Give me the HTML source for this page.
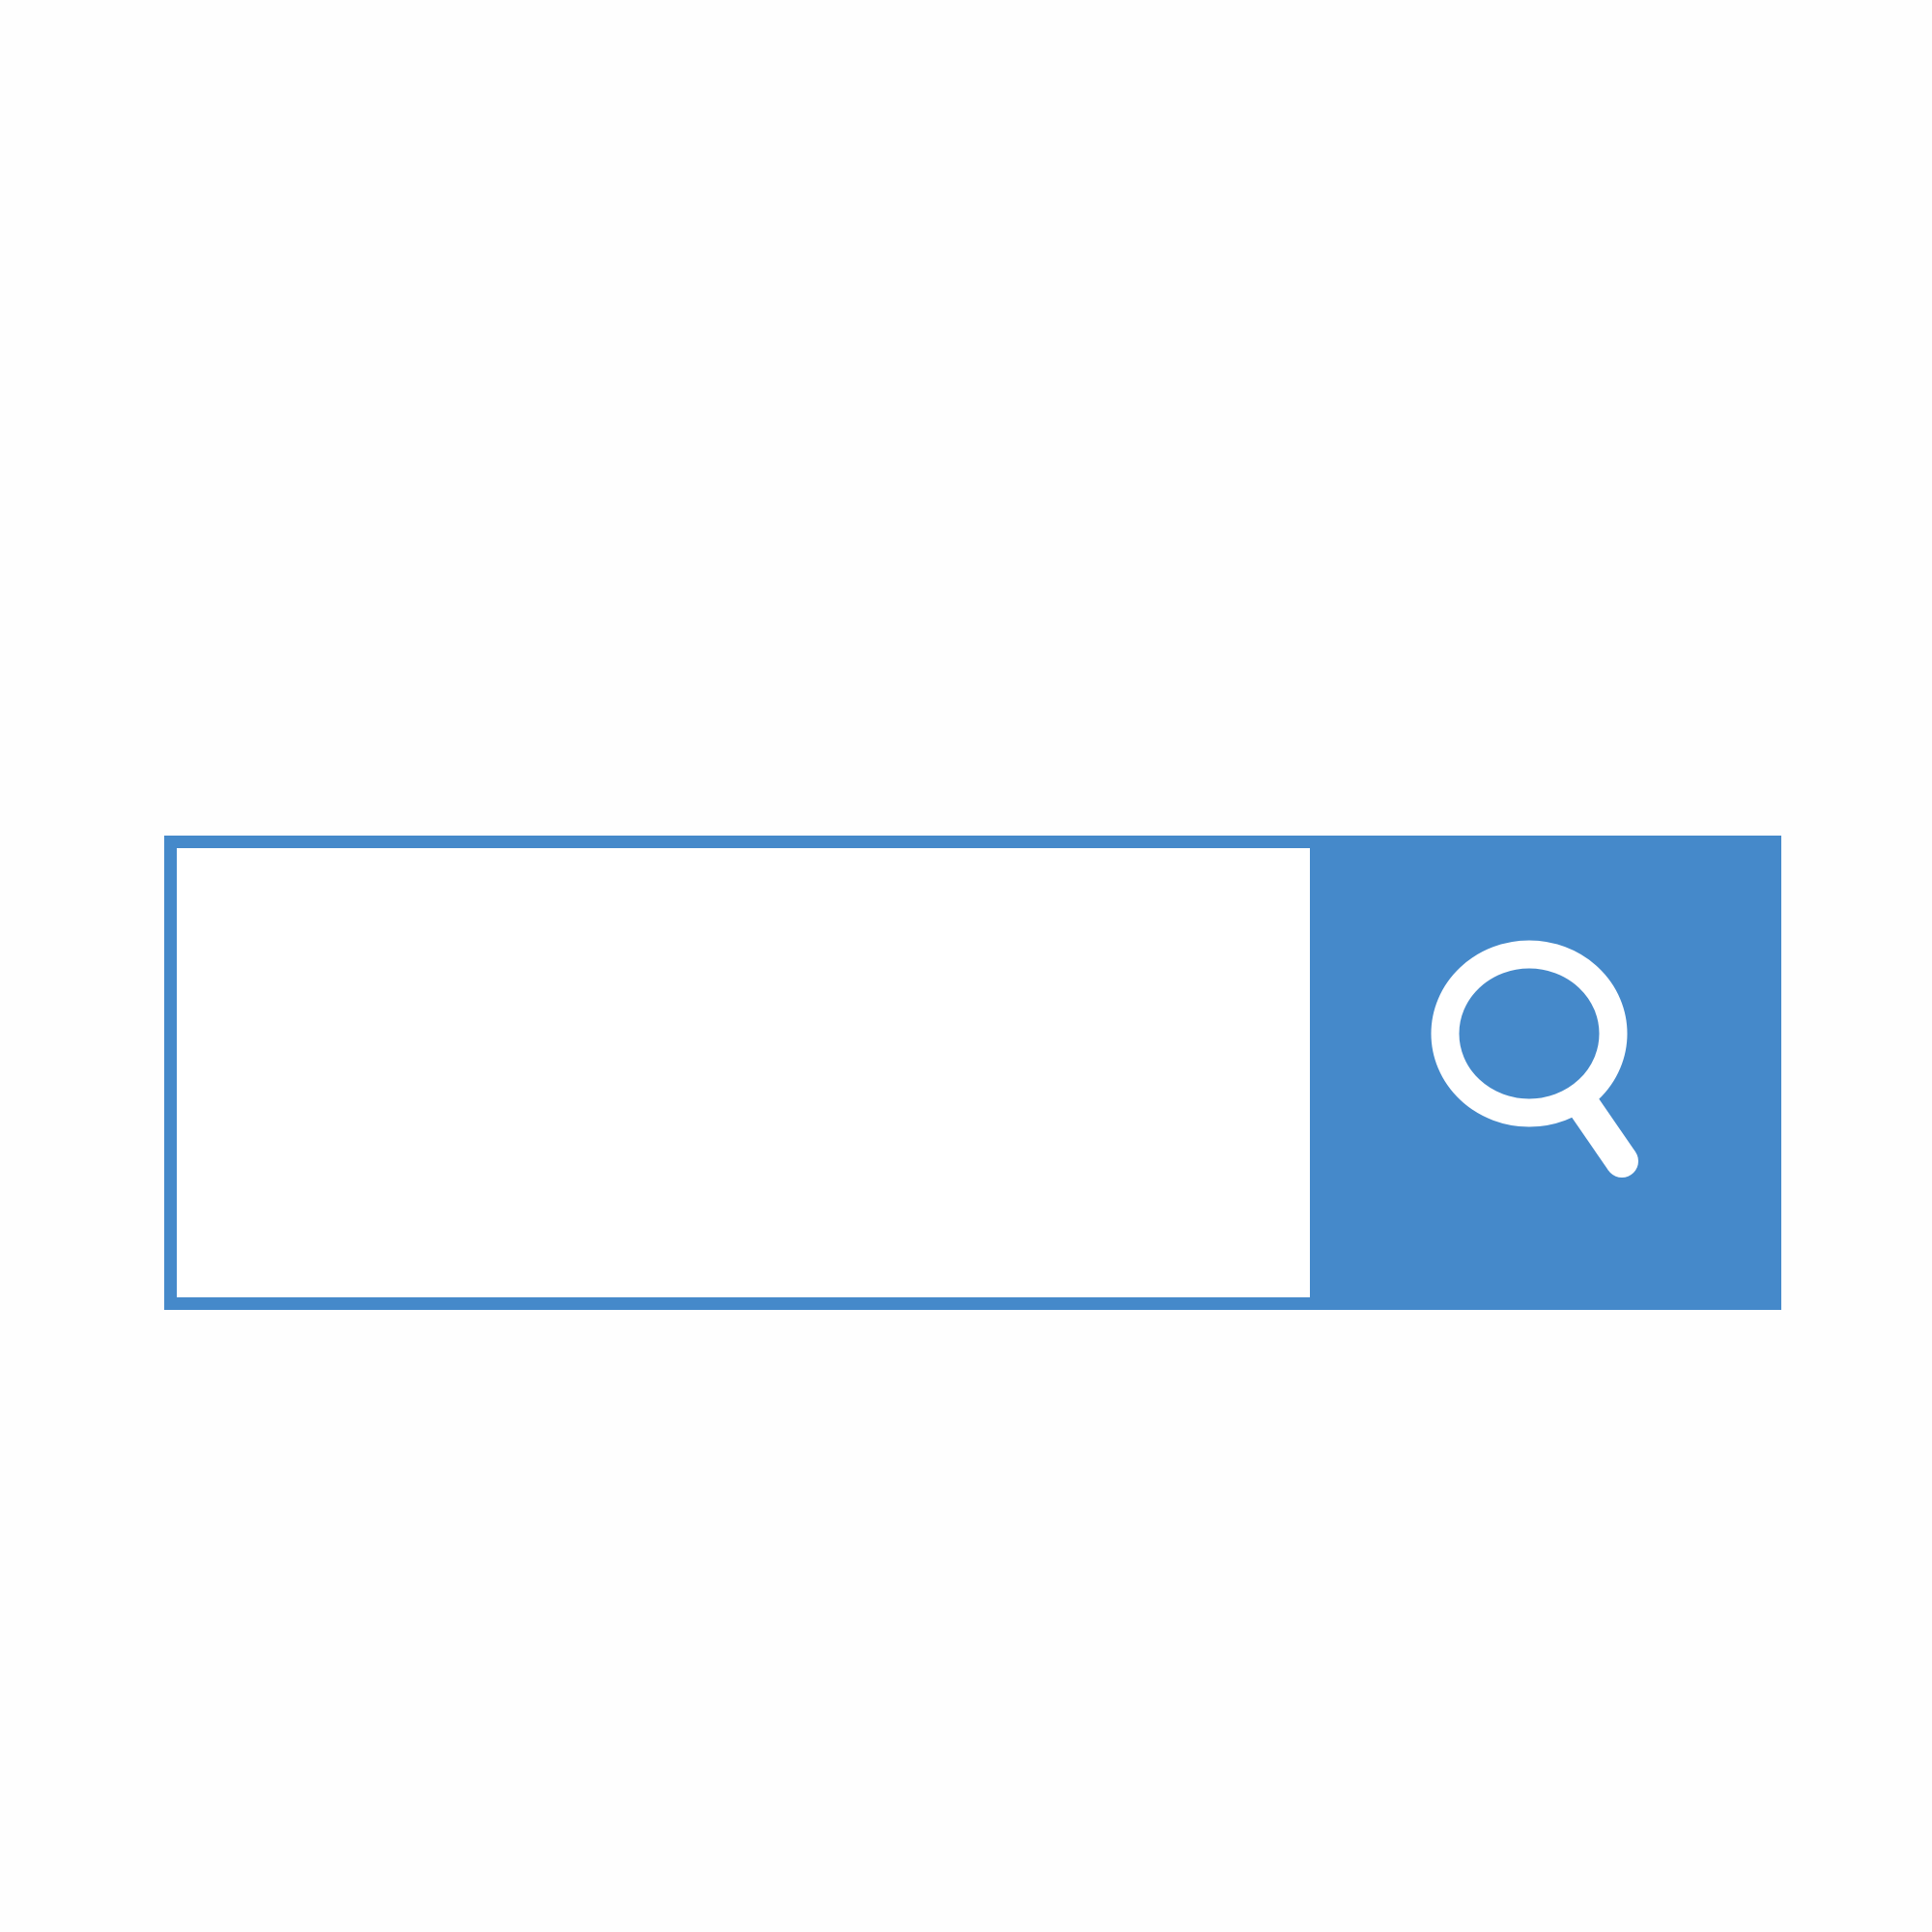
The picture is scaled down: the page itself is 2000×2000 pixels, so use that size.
<!DOCTYPE html>
<html><head><style>
html,body{margin:0;padding:0;background:#fefefe;width:2000px;height:2000px;overflow:hidden}
</style></head><body>
<svg width="2000" height="2000" viewBox="0 0 2000 2000" style="position:absolute;left:0;top:0">
<rect x="176.5" y="871.5" width="1661" height="478" fill="#fff" stroke="#4589ca" stroke-width="13"/>
<rect x="1356" y="878" width="476" height="465" fill="#4589ca"/>
<ellipse cx="1583" cy="1070" rx="87" ry="82" fill="none" stroke="#fff" stroke-width="29"/>
<line x1="1628" y1="1128" x2="1679" y2="1202" stroke="#fff" stroke-width="34" stroke-linecap="butt"/>
<circle cx="1679" cy="1202" r="17" fill="#fff"/>
</svg>
</body></html>
